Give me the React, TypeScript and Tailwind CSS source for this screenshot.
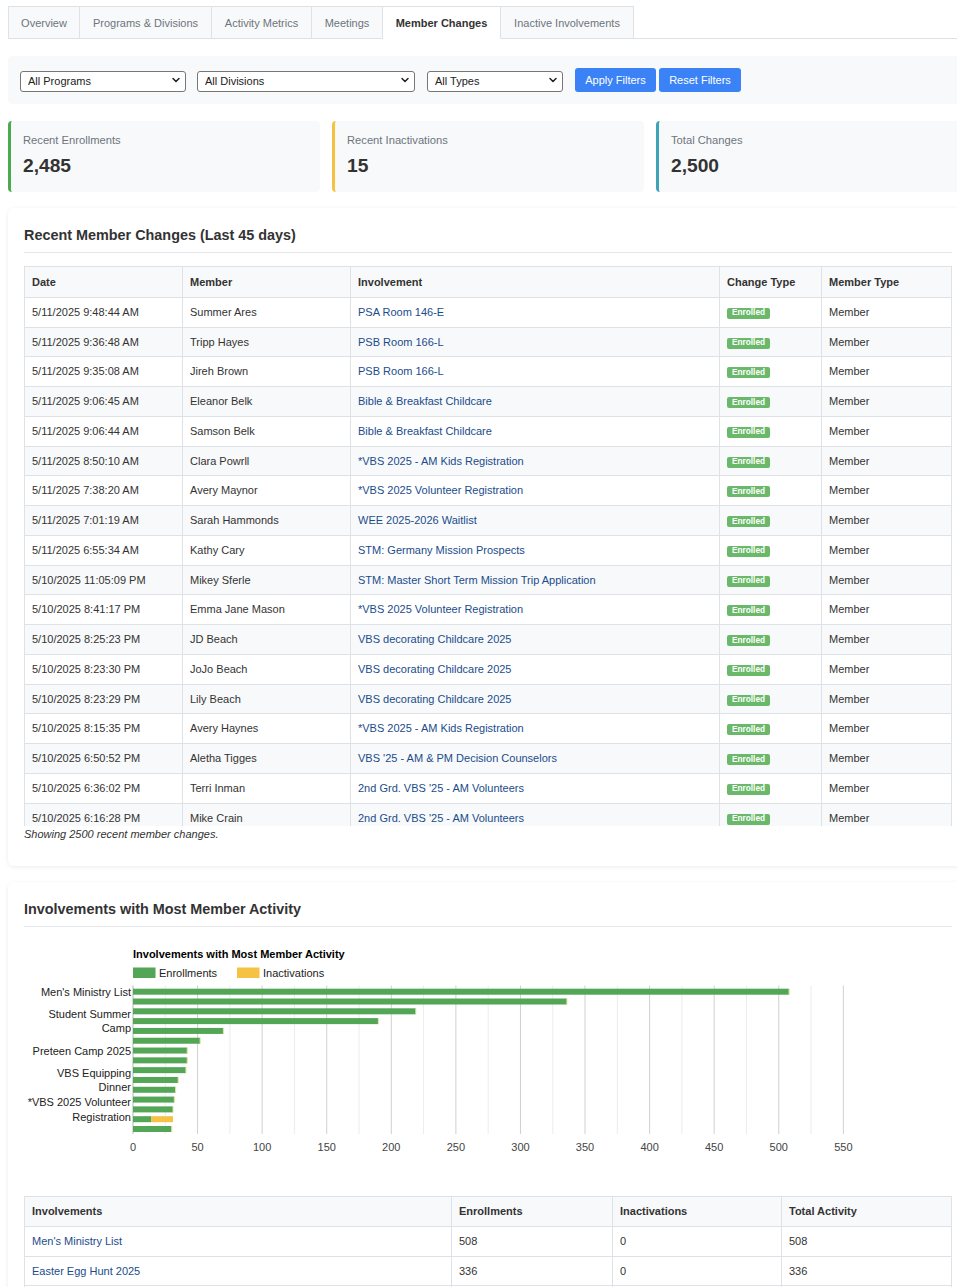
import React from "react";
import { ChevronDown } from "lucide-react";

const tabs: [string, string][] = [
  ["Overview", "w-[72px]"],
  ["Programs & Divisions", "w-[132px]"],
  ["Activity Metrics", "w-[100px]"],
  ["Meetings", "w-[71px]"],
  ["Member Changes", "w-[118px]"],
  ["Inactive Involvements", "w-[133px]"],
];

const rows: [string, string, string][] = [
  ["5/11/2025 9:48:44 AM", "Summer Ares", "PSA Room 146-E"],
  ["5/11/2025 9:36:48 AM", "Tripp Hayes", "PSB Room 166-L"],
  ["5/11/2025 9:35:08 AM", "Jireh Brown", "PSB Room 166-L"],
  ["5/11/2025 9:06:45 AM", "Eleanor Belk", "Bible & Breakfast Childcare"],
  ["5/11/2025 9:06:44 AM", "Samson Belk", "Bible & Breakfast Childcare"],
  ["5/11/2025 8:50:10 AM", "Clara Powrll", "*VBS 2025 - AM Kids Registration"],
  ["5/11/2025 7:38:20 AM", "Avery Maynor", "*VBS 2025 Volunteer Registration"],
  ["5/11/2025 7:01:19 AM", "Sarah Hammonds", "WEE 2025-2026 Waitlist"],
  ["5/11/2025 6:55:34 AM", "Kathy Cary", "STM: Germany Mission Prospects"],
  ["5/10/2025 11:05:09 PM", "Mikey Sferle", "STM: Master Short Term Mission Trip Application"],
  ["5/10/2025 8:41:17 PM", "Emma Jane Mason", "*VBS 2025 Volunteer Registration"],
  ["5/10/2025 8:25:23 PM", "JD Beach", "VBS decorating Childcare 2025"],
  ["5/10/2025 8:23:30 PM", "JoJo Beach", "VBS decorating Childcare 2025"],
  ["5/10/2025 8:23:29 PM", "Lily Beach", "VBS decorating Childcare 2025"],
  ["5/10/2025 8:15:35 PM", "Avery Haynes", "*VBS 2025 - AM Kids Registration"],
  ["5/10/2025 6:50:52 PM", "Aletha Tigges", "VBS '25 - AM & PM Decision Counselors"],
  ["5/10/2025 6:36:02 PM", "Terri Inman", "2nd Grd. VBS '25 - AM Volunteers"],
  ["5/10/2025 6:16:28 PM", "Mike Crain", "2nd Grd. VBS '25 - AM Volunteers"],
  ["5/10/2025 6:02:11 PM", "Grace Crain", "2nd Grd. VBS '25 - AM Volunteers"],
  ["5/10/2025 5:48:40 PM", "Noah Pierce", "*VBS 2025 - AM Kids Registration"],
];

const activity: [string, number, number][] = [
  ["Men's Ministry List", 508, 0],
  ["Easter Egg Hunt 2025", 336, 0],
  ["Student Summer Camp", 219, 0],
  ["Student Summer Camp", 190, 0],
];

const bars: [number, number][] = [
  [508, 0],
  [336, 0],
  [219, 0],
  [190, 0],
  [70, 0],
  [52, 0],
  [42, 0],
  [42, 0],
  [41, 0],
  [35, 0],
  [33, 0],
  [32, 0],
  [31, 0],
  [14, 17],
  [30, 0],
];

const X0 = 109;
const SCALE = 1.2915;
const sx = (v: number) => X0 + v * SCALE;

function Select({ label, w }: { label: string; w: string }) {
  return (
    <div className={`relative ${w}`}>
      <select className="appearance-none w-full h-[21px] border border-[#767676] rounded-[3px] bg-white pl-[7px] text-[11px] leading-[19px] text-[#222] outline-none">
        <option>{label}</option>
      </select>
      <ChevronDown
        size={12}
        strokeWidth={3}
        className="pointer-events-none absolute right-[4px] top-1/2 -translate-y-1/2 text-[#222]"
      />
    </div>
  );
}

function Stat({ label, value, color }: { label: string; value: string; color: string }) {
  return (
    <div className={`bg-[#f8f9fa] rounded-[4px] border-l-[3px] ${color} pl-3 pt-[13px] pb-[15px]`}>
      <div className="text-[11.2px] leading-[13px] text-[#6c757d] mb-[8px]">{label}</div>
      <div className="text-[19.2px] leading-[22px] font-bold text-[#333]">{value}</div>
    </div>
  );
}

function Chart() {
  const grid = [];
  for (let k = 0; k <= 22; k++) {
    const x = sx(k * 25);
    grid.push(
      <line
        key={k}
        x1={x}
        x2={x}
        y1={57.5}
        y2={206}
        stroke={k === 0 ? "#b5b5b5" : k % 2 === 0 ? "#d0d0d0" : "#ececec"}
        strokeWidth={1}
      />
    );
  }
  const ticks = [];
  for (let k = 0; k <= 11; k++) {
    ticks.push(
      <text key={k} x={sx(k * 50)} y={223} textAnchor="middle" fontSize={11} fill="#444">
        {k * 50}
      </text>
    );
  }
  const yLabels: [string, number][] = [
    ["Men's Ministry List", 68],
    ["Student Summer", 90],
    ["Camp", 104],
    ["Preteen Camp 2025", 127],
    ["VBS Equipping", 149],
    ["Dinner", 163],
    ["*VBS 2025 Volunteer", 178],
    ["Registration", 193],
  ];
  return (
    <svg width={927} height={240} className="block mt-px" fontFamily="'Liberation Sans', Arial, sans-serif">
      <text x={109} y={30} fontSize={11} fontWeight="bold" fill="#000">
        Involvements with Most Member Activity
      </text>
      <rect x={109} y={39.5} width={22.5} height={10.5} fill="#52a655" />
      <text x={135} y={48.5} fontSize={11} fill="#222">
        Enrollments
      </text>
      <rect x={213} y={39.5} width={22.5} height={10.5} fill="#f6c244" />
      <text x={239} y={48.5} fontSize={11} fill="#222">
        Inactivations
      </text>
      {grid}
      {bars.map(([e, i], idx) => {
        const cy = 63.7 + idx * 9.807;
        const y = cy - 3;
        return (
          <g key={idx}>
            <rect x={X0} y={y} width={e * SCALE} height={6} fill="#52a655" />
            {i > 0 ? (
              <rect x={sx(e)} y={y} width={i * SCALE} height={6} fill="#f6c244" />
            ) : (
              <rect x={sx(e) - 0.5} y={y} width={1} height={6} fill="#e8e3a0" />
            )}
          </g>
        );
      })}
      {yLabels.map(([t, y]) => (
        <text key={t} x={107} y={y} textAnchor="end" fontSize={11} fill="#222">
          {t}
        </text>
      ))}
      {ticks}
    </svg>
  );
}

export default function App() {
  return (
    <div className="h-screen w-screen overflow-x-hidden overflow-y-auto [scrollbar-width:none] bg-white font-['Liberation_Sans',Arial,sans-serif] text-[#333]">
      <div className="pt-[6px] pl-2 pb-6">
        {/* Tabs */}
        <div className="flex border-b border-[#dee2e6] w-[949px]">
          {tabs.map(([t, w], i) => {
            const active = t === "Member Changes";
            return (
              <div
                key={t}
                className={`-mb-px ${w} text-center whitespace-nowrap border-t border-r border-b ${i === 0 ? "border-l" : ""} border-[#dee2e6] pt-[10px] pb-[8px] text-[11px] leading-[13px] ${
                  active
                    ? "bg-white border-b-white font-bold text-[#333]"
                    : "bg-[#f8f9fa] text-[#6c757d]"
                }`}
              >
                {t}
              </div>
            );
          })}
        </div>

        <div className="w-[960px]">
          {/* Filters */}
          <div className="mt-[17px] bg-[#f8f9fa] rounded-[4px] px-3 py-3 flex items-center">
            <Select label="All Programs" w="w-[166px]" />
            <div className="w-[11px]" />
            <Select label="All Divisions" w="w-[218px]" />
            <div className="w-3" />
            <Select label="All Types" w="w-[136px]" />
            <button className="ml-3 h-[24px] w-[81px] rounded-[3px] bg-[#3b82f6] text-white text-[11px] leading-[25px] font-medium">
              Apply Filters
            </button>
            <button className="ml-[3px] h-[24px] w-[82px] rounded-[3px] bg-[#3b82f6] text-white text-[11px] leading-[25px] font-medium">
              Reset Filters
            </button>
          </div>

          {/* Stats */}
          <div className="mt-[17px] grid grid-cols-3 gap-3">
            <Stat label="Recent Enrollments" value="2,485" color="border-[#4caa4c]" />
            <Stat label="Recent Inactivations" value="15" color="border-[#f6c23e]" />
            <Stat label="Total Changes" value="2,500" color="border-[#3ea3b7]" />
          </div>

          {/* Recent changes */}
          <div className="mt-4 bg-white rounded-[6px] shadow-[0_1px_4px_rgba(0,0,0,0.08)] px-4 pt-[18px] pb-[25px]">
            <h3 className="text-[14.4px] leading-[18px] font-bold text-[#333] pb-[8px] border-b border-[#e5e7eb]">
              Recent Member Changes (Last 45 days)
            </h3>
            <div className="mt-[13px] max-h-[560px] overflow-y-auto [scrollbar-width:none]">
              <table className="w-[927px] table-fixed border-collapse text-[11px] leading-[12.75px]">
                <colgroup>
                  <col className="w-[158px]" />
                  <col className="w-[168px]" />
                  <col className="w-[369px]" />
                  <col className="w-[102px]" />
                  <col className="w-[130px]" />
                </colgroup>
                <thead>
                  <tr className="bg-[#f8f9fa]">
                    {["Date", "Member", "Involvement", "Change Type", "Member Type"].map((h) => (
                      <th
                        key={h}
                        className="border border-[#dee2e6] px-[7px] pt-[9px] pb-2 text-left font-bold text-[#333]"
                      >
                        {h}
                      </th>
                    ))}
                  </tr>
                </thead>
                <tbody>
                  {rows.map((r, i) => (
                    <tr key={i} className={i % 2 === 1 ? "bg-[#f8f9fa]" : "bg-white"}>
                      <td className="border border-[#dee2e6] px-[7px] py-2 text-[#333]">{r[0]}</td>
                      <td className="border border-[#dee2e6] px-[7px] py-2 text-[#333]">{r[1]}</td>
                      <td className="border border-[#dee2e6] px-[7px] py-2 text-[#1a4c8c] truncate">
                        {r[2]}
                      </td>
                      <td className="border border-[#dee2e6] px-[7px] py-2">
                        <span className="inline-block align-top mt-[2px] -mb-[2px] rounded-[2px] bg-[#6ab86a] text-white font-bold text-[8.25px] leading-[8px] px-[5px] pt-[1.5px] pb-[1.5px]">
                          Enrolled
                        </span>
                      </td>
                      <td className="border border-[#dee2e6] px-[7px] py-2 text-[#333]">Member</td>
                    </tr>
                  ))}
                </tbody>
              </table>
            </div>
            <p className="mt-[2px] text-[11px] leading-[13px] italic text-[#333]">
              Showing 2500 recent member changes.
            </p>
          </div>

          {/* Activity */}
          <div className="mt-4 bg-white rounded-[6px] shadow-[0_1px_4px_rgba(0,0,0,0.08)] px-4 pt-[18px] pb-6">
            <h3 className="text-[14.4px] leading-[18px] font-bold text-[#333] pb-[8px] border-b border-[#e5e7eb]">
              Involvements with Most Member Activity
            </h3>
            <Chart />
            <table className="mt-[28px] w-[927px] table-fixed border-collapse text-[11px] leading-[12.8px]">
              <colgroup>
                <col className="w-[427px]" />
                <col className="w-[161px]" />
                <col className="w-[169px]" />
                <col className="w-[170px]" />
              </colgroup>
              <thead>
                <tr className="bg-[#f8f9fa]">
                  {["Involvements", "Enrollments", "Inactivations", "Total Activity"].map((h) => (
                    <th
                      key={h}
                      className="border border-[#dee2e6] px-[7px] py-2 text-left font-bold text-[#333]"
                    >
                      {h}
                    </th>
                  ))}
                </tr>
              </thead>
              <tbody>
                {activity.map((a, i) => (
                  <tr key={i} className="bg-white">
                    <td className="border border-[#dee2e6] px-[7px] py-2 text-[#1a4c8c]">{a[0]}</td>
                    <td className="border border-[#dee2e6] px-[7px] py-2">{a[1]}</td>
                    <td className="border border-[#dee2e6] px-[7px] py-2">{a[2]}</td>
                    <td className="border border-[#dee2e6] px-[7px] py-2">{a[1] + a[2]}</td>
                  </tr>
                ))}
              </tbody>
            </table>
          </div>
        </div>
      </div>
    </div>
  );
}
